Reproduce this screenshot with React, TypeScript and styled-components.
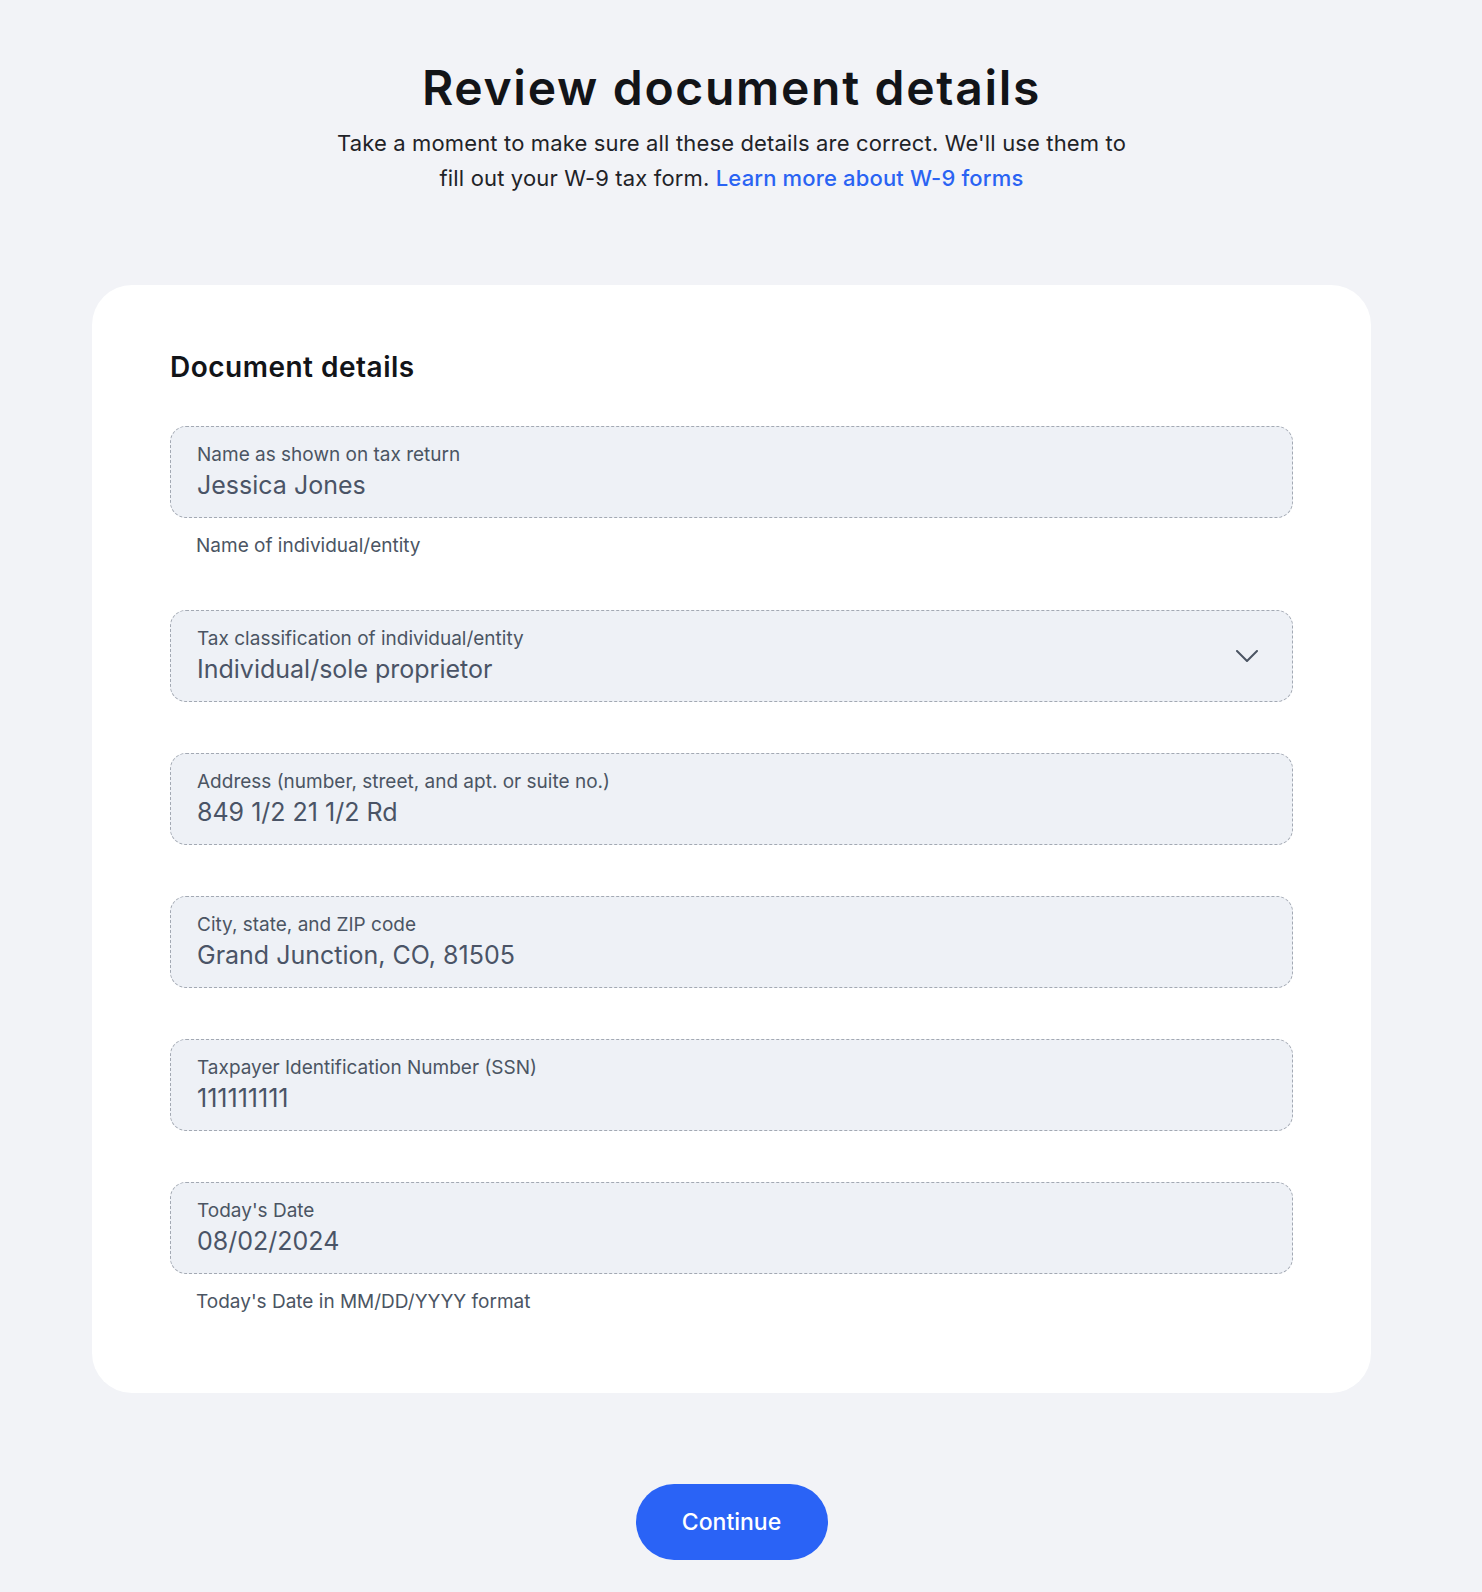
import React, { FC } from 'react';
import styled, { createGlobalStyle } from 'styled-components';

const GlobalStyle = createGlobalStyle`
  html, body {
    margin: 0;
    padding: 0;
    background: #f2f3f7;
  }
  * {
    box-sizing: border-box;
    font-optical-sizing: none;
  }
`;

type Field = {
  label: string;
  value: string;
  hint?: string;
  select?: boolean;
};

const fields: Field[] = [
  { label: 'Name as shown on tax return', value: 'Jessica Jones', hint: 'Name of individual/entity' },
  { label: 'Tax classification of individual/entity', value: 'Individual/sole proprietor', select: true },
  { label: 'Address (number, street, and apt. or suite no.)', value: '849 1/2 21 1/2 Rd' },
  { label: 'City, state, and ZIP code', value: 'Grand Junction, CO, 81505' },
  { label: 'Taxpayer Identification Number (SSN)', value: '111111111' },
  { label: "Today's Date", value: '08/02/2024', hint: "Today's Date in MM/DD/YYYY format" },
];

const Chevron: FC = () => (
  <svg width="22" height="12" viewBox="0 0 22 12" fill="none">
    <path d="M1 1L11 11L21 1" stroke="#4b5563" strokeWidth="2" strokeLinecap="round" strokeLinejoin="round" />
  </svg>
);

const App: FC = () => {
  return (
    <Page>
      <GlobalStyle />
      <Header>
        <Title>Review document details</Title>
        <Subtitle>
          Take a moment to make sure all these details are correct. We'll use them to
          <br />
          fill out your W-9 tax form. <Link href="#">Learn more about W-9 forms</Link>
        </Subtitle>
      </Header>

      <Card>
        <CardTitle>Document details</CardTitle>
        <FieldList>
          {fields.map(f => (
            <FieldGroup key={f.label}>
              <FieldBox>
                <FieldText>
                  <FieldLabel>{f.label}</FieldLabel>
                  <FieldValue>{f.value}</FieldValue>
                </FieldText>
                {f.select && (
                  <ChevronWrap>
                    <Chevron />
                  </ChevronWrap>
                )}
              </FieldBox>
              {f.hint && <FieldHint>{f.hint}</FieldHint>}
            </FieldGroup>
          ))}
        </FieldList>
      </Card>

      <Footer>
        <ContinueButton type="button">Continue</ContinueButton>
      </Footer>
    </Page>
  );
};

const Page = styled.div`
  min-height: 100vh;
  padding: 59px 111px 22px 92px;
  font-family: Inter, 'Noto Sans', sans-serif;
  color: #1b1f24;
`;

const Header = styled.header`
  text-align: center;
`;

const Title = styled.h1`
  margin: 0;
  font-size: 48px;
  line-height: 58px;
  font-weight: 600;
  letter-spacing: 1.7px;
  color: #121418;
`;

const Subtitle = styled.p`
  margin: 9px 0 0;
  font-size: 22px;
  line-height: 35px;
  font-weight: 400;
  letter-spacing: 0.15px;
  color: #1f2328;
`;

const Link = styled.a`
  color: #2a63f3;
  text-decoration: none;
  font-weight: 500;
`;

const Card = styled.section`
  margin-top: 89px;
  background: #ffffff;
  border-radius: 40px;
  padding: 65px 78px 78px;
`;

const CardTitle = styled.h2`
  margin: 0 0 42px;
  font-size: 28px;
  line-height: 34px;
  font-weight: 600;
  letter-spacing: 0.5px;
  color: #121418;
`;

const FieldList = styled.div`
  display: flex;
  flex-direction: column;
  gap: 51px;
`;

const FieldGroup = styled.div`
  display: flex;
  flex-direction: column;
`;

const FieldBox = styled.div`
  height: 92px;
  display: flex;
  align-items: center;
  justify-content: space-between;
  padding: 0 34px 0 26px;
  background: #eef1f6;
  border: 1px dashed #a3a9b3;
  border-radius: 16px;
`;

const FieldText = styled.div`
  display: flex;
  flex-direction: column;
  gap: 4px;
`;

const FieldLabel = styled.span`
  font-size: 19px;
  line-height: 22px;
  color: #4b5563;
`;

const FieldValue = styled.span`
  font-size: 25px;
  line-height: 30px;
  color: #4a5466;
`;

const ChevronWrap = styled.span`
  display: flex;
  align-items: center;
`;

const FieldHint = styled.span`
  margin-top: 15px;
  padding-left: 26px;
  font-size: 19px;
  line-height: 26px;
  color: #4b5563;
`;

const Footer = styled.div`
  display: flex;
  justify-content: center;
  margin-top: 91px;
`;

const ContinueButton = styled.button`
  width: 192px;
  height: 76px;
  border: none;
  border-radius: 38px;
  background: #2a63f6;
  color: #ffffff;
  font-family: Inter, 'Noto Sans', sans-serif;
  font-size: 23px;
  font-weight: 500;
  cursor: pointer;
`;

export default App;
